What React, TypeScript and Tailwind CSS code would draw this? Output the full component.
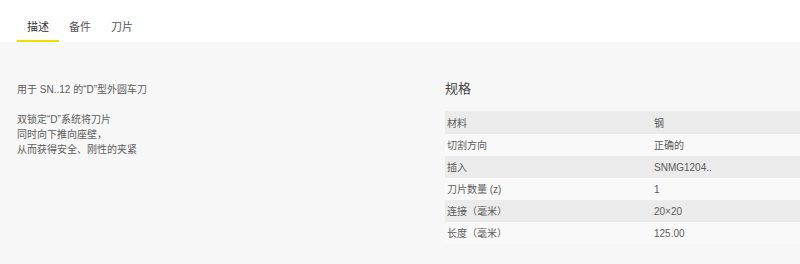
import { useState } from "react";

const tabs = ["描述", "备件", "刀片"];

const specs = [
  { name: "材料", value: "钢" },
  { name: "切割方向", value: "正确的" },
  { name: "插入", value: "SNMG1204.." },
  { name: "刀片数量 (z)", value: "1" },
  { name: "连接（毫米）", value: "20×20" },
  { name: "长度（毫米）", value: "125.00" },
];

export default function App() {
  const [active, setActive] = useState(0);

  return (
    <div
      className="min-h-[264px] bg-[#f7f7f7] text-[#5c5c5c]"
      style={{ fontFamily: '"Liberation Sans", "Noto Sans CJK SC", sans-serif' }}
    >
      <nav className="flex h-[42px] bg-white pl-[17px]">
        {tabs.map((tab, i) => (
          <button
            key={tab}
            type="button"
            onClick={() => setActive(i)}
            className={
              i === active
                ? "border-b-2 border-[#f5dc00] px-[10px] pt-[20px] pb-[5px] text-[11px] leading-[15px] text-[#333]"
                : "border-b-2 border-transparent px-[10px] pt-[20px] pb-[5px] text-[11px] leading-[15px] text-[#555]"
            }
          >
            {tab}
          </button>
        ))}
      </nav>

      <div className="flex pt-[40px] pl-[17px]">
        <div className="w-[428px] text-[10px] leading-[15px]">
          <p>用于 SN..12 的“D”型外圆车刀</p>
          <p className="mt-[15px]">双锁定“D”系统将刀片</p>
          <p>同时向下推向座壁，</p>
          <p>从而获得安全、刚性的夹紧</p>
        </div>

        <div className="flex-1">
          <h2 className="text-[13px] leading-[14px] text-[#444]">规格</h2>
          <div className="mt-[15px] text-[10px]">
            {specs.map((row, i) => (
              <div
                key={row.name}
                className={
                  i === 0
                    ? "flex h-[23px] items-center bg-[#ebebeb] pt-px"
                    : i % 2 === 0
                      ? "flex h-[22px] items-center bg-[#ebebeb]"
                      : "flex h-[22px] items-center bg-[#f9f9f9]"
                }
              >
                <div className="w-[207px] pl-[2px]">{row.name}</div>
                <div className="pl-[2px]">{row.value}</div>
              </div>
            ))}
          </div>
        </div>
      </div>
    </div>
  );
}
